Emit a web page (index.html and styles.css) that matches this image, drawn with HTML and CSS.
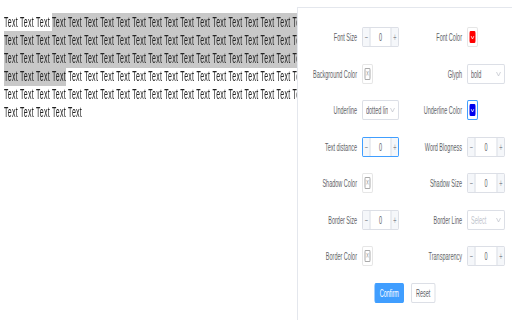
FILE: index.html
```html
<!DOCTYPE html>
<html>
<head>
    <title>Text Style Panel</title>
    <link rel="stylesheet" href="styles.css">
</head>
<body>
    <div class="page">
        <p class="text">Text Text Text <span class="selected">Text Text Text Text Text Text Text Text Text Text
            Text Text Text Text Text Text Text Text Text Text
            Text Text Text Text Text Text Text Text Text Text
            Text Text Text Text Text Text Text Text Text Text
            Text Text Text Text Text Text Text Text Text Text
            Text Text Text Text Text Text Text Text Text Text
            Text Text Text Text Text Text Text Text Text Text
            Text Text Text Text Text Text Text Text Text Text
            Text Text Text Text Text Text Text Text Text Text
            Text Text Text Text</span>
            Text Text Text Text Text Text Text Text Text Text
            Text Text Text Text Text Text Text Text Text Text
            Text Text Text Text Text Text Text Text Text Text
            Text Text Text Text Text Text Text Text Text Text
            Text Text Text Text Text Text Text Text Text Text
            Text Text Text Text Text Text Text Text Text Text
            Text Text Text</p>

        <div class="panel">
            <div class="form">
                <label class="label">Font Size</label>
                <div class="number">
                    <span class="step minus">−</span><span class="value">0</span><span class="step plus">+</span>
                </div>
                <label class="label">Font Color</label>
                <div class="picker">
                    <span class="swatch filled red">
                        <svg width="8" height="5" viewBox="0 0 8 5"><polyline points="1,1 4,4 7,1" fill="none" stroke="#fff" stroke-width="1"/></svg>
                    </span>
                </div>

                <label class="label">Background Color</label>
                <div class="picker"><span class="swatch">×</span></div>
                <label class="label">Glyph</label>
                <div class="select">
                    <span>bold</span>
                    <svg width="10" height="6" viewBox="0 0 10 6"><polyline points="1,1 5,5 9,1" fill="none" stroke="#c0c4cc" stroke-width="1"/></svg>
                </div>

                <label class="label">Underline</label>
                <div class="select">
                    <span>dotted line</span>
                    <svg width="10" height="6" viewBox="0 0 10 6"><polyline points="1,1 5,5 9,1" fill="none" stroke="#c0c4cc" stroke-width="1"/></svg>
                </div>
                <label class="label">Underline Color</label>
                <div class="picker focus">
                    <span class="swatch filled blue">
                        <svg width="8" height="5" viewBox="0 0 8 5"><polyline points="1,1 4,4 7,1" fill="none" stroke="#fff" stroke-width="1"/></svg>
                    </span>
                </div>

                <label class="label">Text distance</label>
                <div class="number focus">
                    <span class="step minus">−</span><span class="value">0</span><span class="step plus">+</span>
                </div>
                <label class="label">Word Blogness</label>
                <div class="number">
                    <span class="step minus">−</span><span class="value">0</span><span class="step plus">+</span>
                </div>

                <label class="label">Shadow Color</label>
                <div class="picker"><span class="swatch">×</span></div>
                <label class="label">Shadow Size</label>
                <div class="number">
                    <span class="step minus">−</span><span class="value">0</span><span class="step plus">+</span>
                </div>

                <label class="label">Border Size</label>
                <div class="number">
                    <span class="step minus">−</span><span class="value">0</span><span class="step plus">+</span>
                </div>
                <label class="label">Border Line</label>
                <div class="select placeholder">
                    <span>Select</span>
                    <svg width="10" height="6" viewBox="0 0 10 6"><polyline points="1,1 5,5 9,1" fill="none" stroke="#c0c4cc" stroke-width="1"/></svg>
                </div>

                <label class="label">Border Color</label>
                <div class="picker"><span class="swatch">×</span></div>
                <label class="label">Transparency</label>
                <div class="number">
                    <span class="step minus">−</span><span class="value">0</span><span class="step plus">+</span>
                </div>
            </div>

            <div class="actions">
                <button class="btn btn-primary">Confirm</button>
                <button class="btn btn-reset">Reset</button>
            </div>
        </div>
    </div>
</body>
</html>
```

FILE: styles.css
```css
* {
    box-sizing: border-box;
}
html, body {
    margin: 0;
    overflow: hidden;
}
body {
    font-family: "Liberation Sans", Arial, sans-serif;
    background: #fff;
}
/* the whole screen is drawn squeezed to half its width */
.page {
    position: relative;
    width: 1024px;
    height: 320px;
    overflow: hidden;
    transform: scaleX(0.5);
    transform-origin: 0 0;
}
.text {
    width: 998px;
    margin: 0;
    padding: 13px 0 0 8px;
    font-size: 14px;
    line-height: 18px;
    letter-spacing: 0.55px;
    color: #222;
}
.selected {
    background: #c8c8c8;
    padding: 1px 0 2px;
}
.panel {
    position: absolute;
    top: 7px;
    left: 594px;
    right: 0;
    bottom: 0;
    background: #fff;
    border-left: 2px solid #e4e7ed;
    border-top: 1px solid #e4e7ed;
    padding: 19px 14px 0 0;
}
.form {
    display: grid;
    grid-template-columns: 118px 74px 1fr 76px;
    grid-auto-rows: 20px;
    column-gap: 10px;
    row-gap: 16.5px;
    align-items: center;
}
.label {
    text-align: right;
    font-size: 11px;
    color: #606266;
    white-space: nowrap;
}
.number {
    display: flex;
    height: 20px;
    border: solid #dcdfe6;
    border-width: 1px 2px;
    border-radius: 3px;
    font-size: 11px;
    color: #606266;
    background: #fff;
    overflow: hidden;
}
.number.focus {
    border-color: #409eff;
}
.step {
    width: 15px;
    display: flex;
    align-items: center;
    justify-content: center;
    background: #f5f7fa;
    color: #909399;
}
.minus {
    border-right: 2px solid #dcdfe6;
}
.plus {
    border-left: 2px solid #dcdfe6;
}
.value {
    flex: 1;
    display: flex;
    align-items: center;
    justify-content: center;
}
.select {
    display: flex;
    align-items: center;
    gap: 4px;
    height: 20px;
    padding: 0 6px;
    border: solid #dcdfe6;
    border-width: 1px 2px;
    border-radius: 3px;
    font-size: 11px;
    color: #606266;
}
.select span {
    flex: 1;
    overflow: hidden;
    white-space: nowrap;
}
.select.placeholder {
    color: #c0c4cc;
}
.picker {
    width: 22px;
    height: 20px;
    padding: 3px;
    border: solid #e6e6e6;
    border-width: 1px 2px;
    border-radius: 3px;
}
.picker.focus {
    border-color: #409eff;
}
.swatch {
    display: flex;
    align-items: center;
    justify-content: center;
    height: 100%;
    border: solid #aaa;
    border-width: 1px 2px;
    border-radius: 2px;
    font-size: 10px;
    line-height: 1;
    color: #999;
}
.swatch.filled {
    border: none;
}
.red {
    background: #ff0000;
}
.blue {
    background: #0000ee;
}
.actions {
    display: flex;
    justify-content: center;
    gap: 14px;
    margin-top: 17px;
    padding-left: 14px;
}
.btn {
    height: 20px;
    padding: 0 8px;
    font-family: inherit;
    font-size: 11px;
    color: #606266;
    background: #fff;
    border: solid #dcdfe6;
    border-width: 1px 2px;
    border-radius: 3px;
}
.btn-reset {
    min-width: 48px;
}
.btn-primary {
    color: #fff;
    background: #409eff;
    border-color: #409eff;
}
```
